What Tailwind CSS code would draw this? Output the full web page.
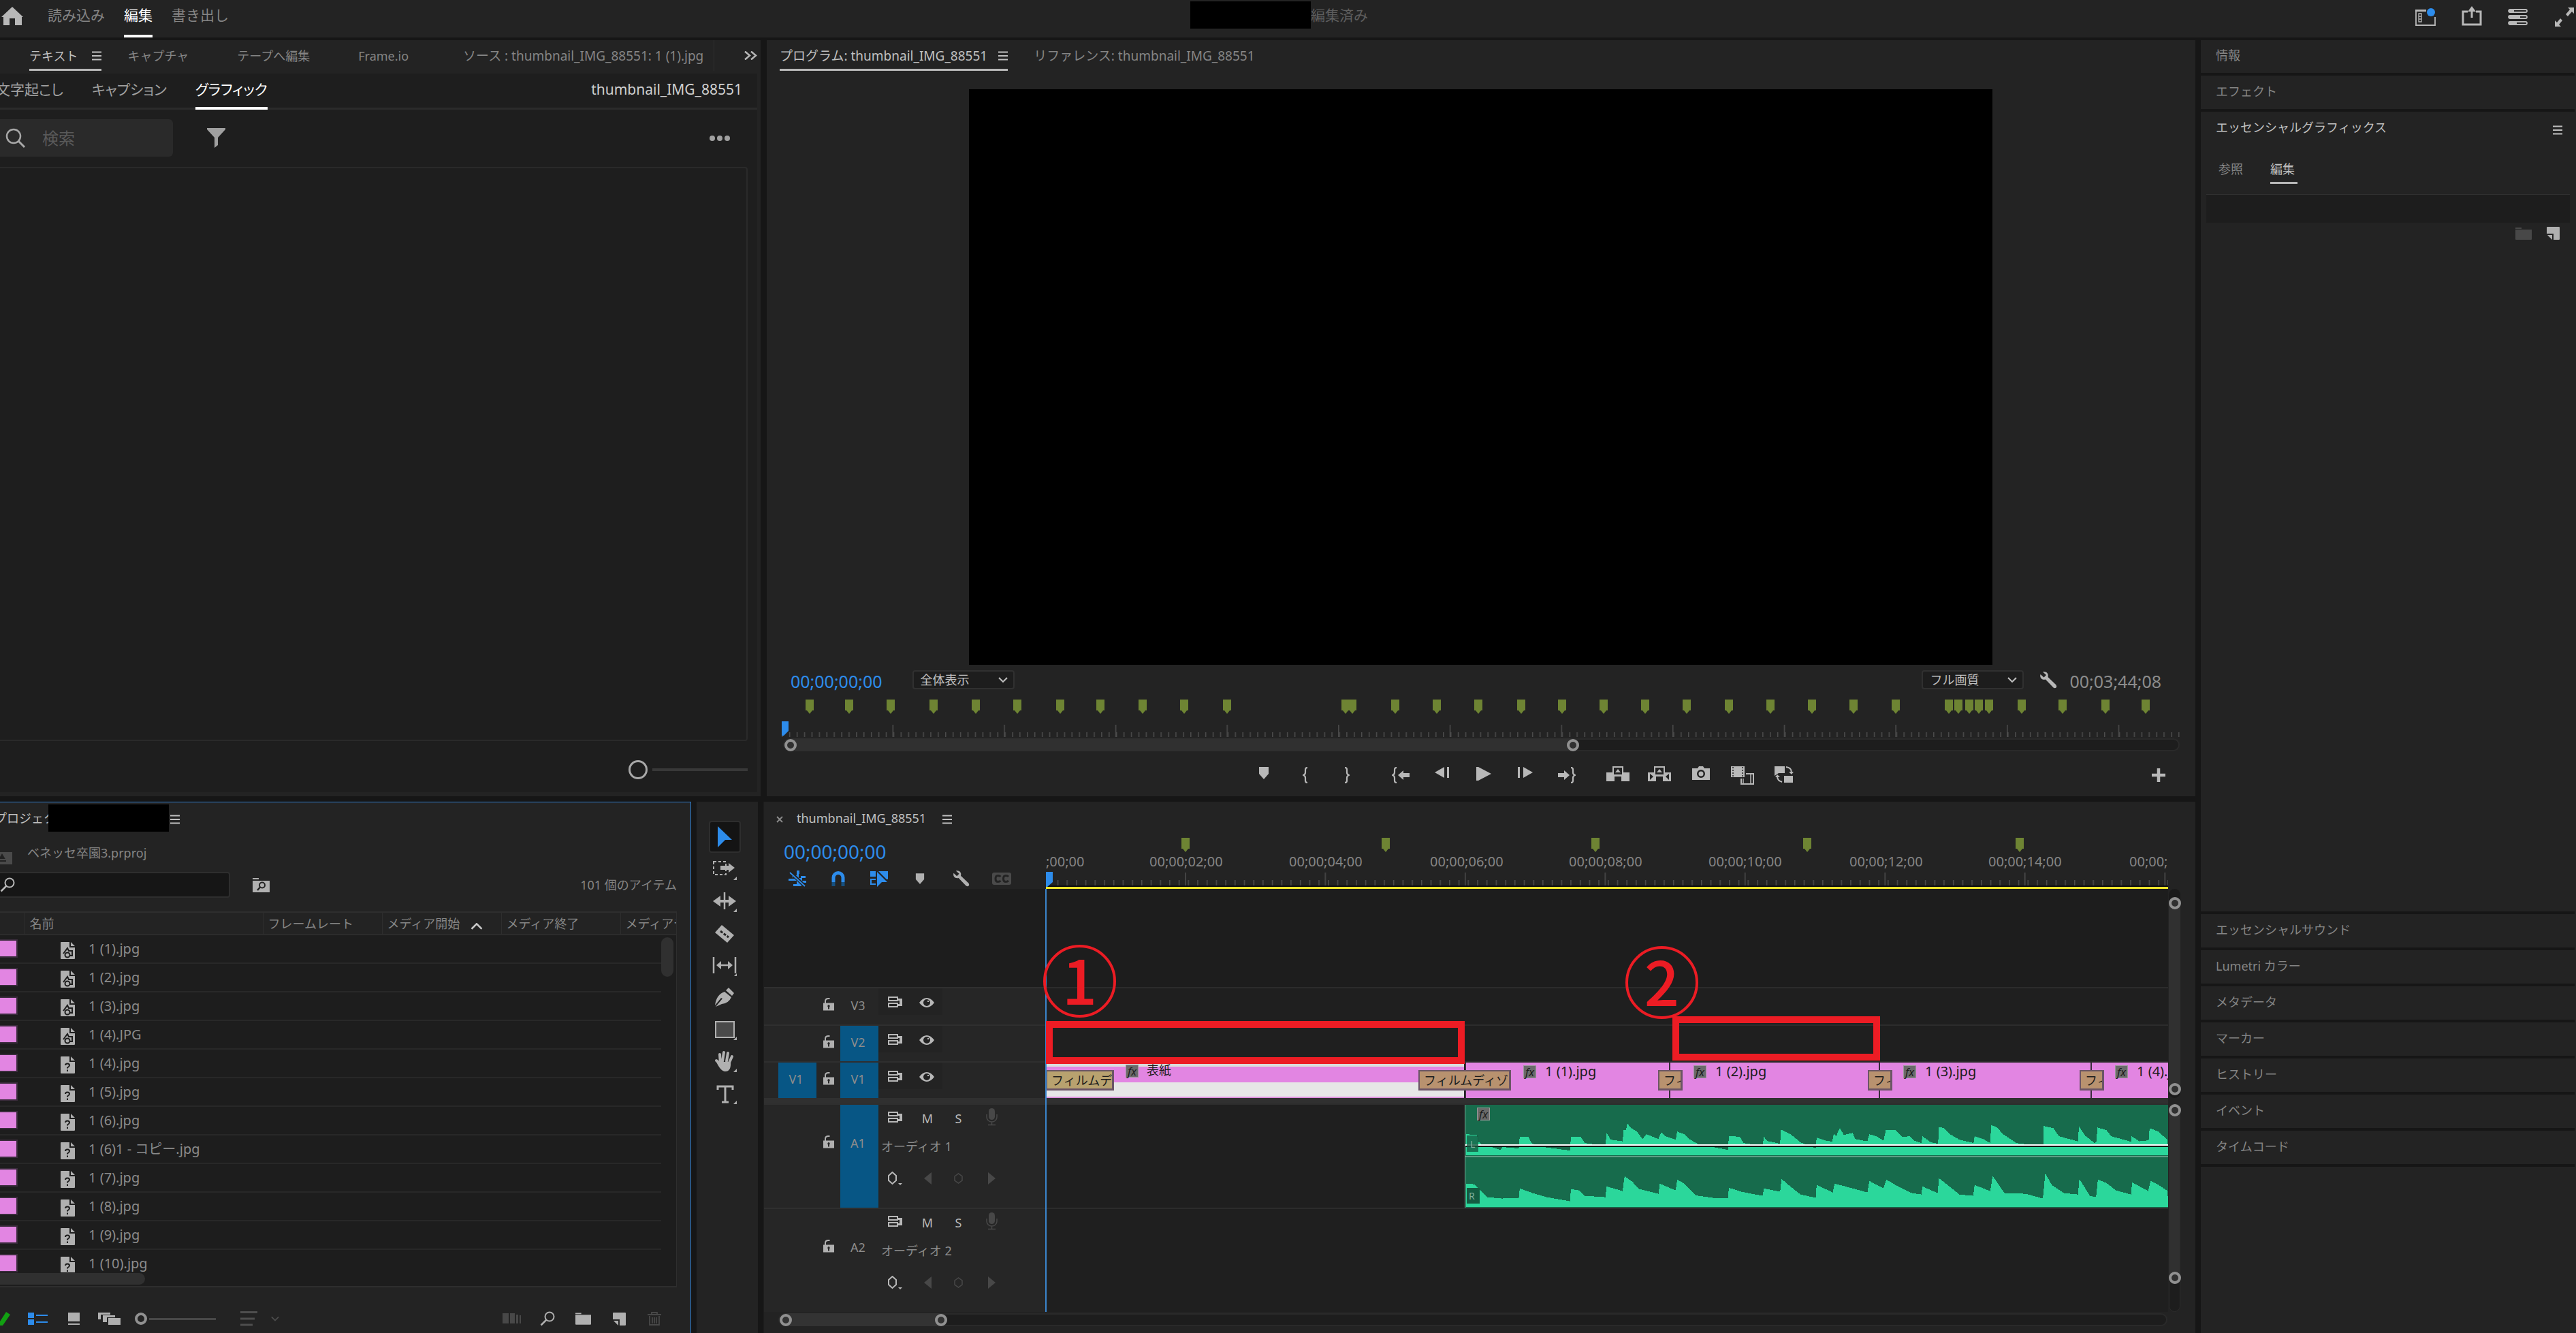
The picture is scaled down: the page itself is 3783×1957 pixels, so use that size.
<!DOCTYPE html>
<html lang="ja">
<head>
<meta charset="utf-8">
<meta name="viewport" content="width=device-width, initial-scale=1">
<title>thumbnail_IMG_88551</title>
<script src="https://cdn.jsdelivr.net/npm/@tailwindcss/browser@4"></script>
</head>
<body class="flex h-screen flex-col overflow-hidden bg-[#161616] font-['Noto_Sans','Noto_Sans_CJK_JP',sans-serif] text-[18px] leading-6 text-[#858585]">

<!-- Icon sheet -->
<svg class="hidden" aria-hidden="true">
  <symbol id="menu" viewBox="0 0 14 14"><path d="M0 1.5H14M0 7H14M0 12.5H14" stroke="currentColor" stroke-width="2"/></symbol>
  <symbol id="chev" viewBox="0 0 14 8"><path d="M1 1L7 7L13 1" fill="none" stroke="currentColor" stroke-width="2"/></symbol>
  <symbol id="mag" viewBox="0 0 22 22"><circle cx="14" cy="8" r="6.5" fill="none" stroke="currentColor" stroke-width="2"/><path d="M9.5 12.5L1.500 20.500" stroke="currentColor" stroke-width="2.500"/></symbol>
  <symbol id="folder" viewBox="0 0 24 18"><path d="M0 0H9V2H0ZM0 3H24V17Q24 18 23 18H1Q0 18 0 17Z" fill="currentColor"/></symbol>
  <symbol id="newitem" viewBox="0 0 19 19"><path d="M1 0H18Q19 0 19 1V18Q19 19 18 19H10V10H0V1Q0 0 1 0ZM1 12H8V19Z" fill="currentColor"/></symbol>
  <symbol id="wrench" viewBox="0 0 26 26"><path d="M5 1.500L10 6L6.500 9.500L1.500 5C0 10 4 14 9 12.500L20.500 24.500Q23 26 24.500 24.500Q26 23 24.500 20.500L12.500 9C14 4 10 0 5 1.500Z" fill="currentColor"/></symbol>
  <symbol id="pin" viewBox="0 0 16 18"><path d="M1 0H15V10L8 18L1 10Z" fill="currentColor"/></symbol>
  <symbol id="mk" viewBox="0 0 12 21" overflow="visible"><path d="M0 0H12V16H10L6 21L2 16H0Z" fill="#6e8433"/></symbol>
  <symbol id="brace" viewBox="0 0 8 24"><path d="M7 1Q4 1 4 4V8Q4 11 1 12Q4 13 4 16V20Q4 23 7 23" fill="none" stroke="currentColor" stroke-width="2.200"/></symbol>
  <symbol id="lock" viewBox="0 0 16 19"><path d="M3 8V5C3 2 5 1 7.500 1H9.500" fill="none" stroke="currentColor" stroke-width="2"/><path fill-rule="evenodd" d="M0 7.500H16V18.500H0ZM8 10A2 2 0 0 0 7 13.500V16.500H9V13.500A2 2 0 0 0 8 10Z" fill="currentColor"/></symbol>
  <symbol id="sync" viewBox="0 0 22 16"><path d="M1 1H14V6H1ZM1 10H14V15H1Z" fill="none" stroke="currentColor" stroke-width="2"/><path d="M14 3H21V14H14V11H17V6H14Z" fill="currentColor"/></symbol>
  <symbol id="eye" viewBox="0 0 22 14"><path fill-rule="evenodd" d="M0 7Q5 0 11 0Q17 0 22 7Q17 14 11 14Q5 14 0 7ZM11 2A5 5 0 1 0 11 12A5 5 0 1 0 11 2Z" fill="currentColor"/><circle cx="11" cy="7" r="3" fill="#232323"/><rect x="12" y="4" width="2" height="2" fill="currentColor"/></symbol>
  <symbol id="mic" viewBox="0 0 17 26"><rect x="4" y="0" width="9" height="17" rx="4.500" fill="currentColor"/><path d="M1 9V13A7.500 7 0 0 0 16 13V9M8.500 20V24M3 24.500H14" fill="none" stroke="currentColor" stroke-width="1.500"/></symbol>
  <symbol id="hex" viewBox="0 0 22 20"><path d="M1 6L6.500 1L12 6V13L6.500 18L1 13Z" fill="none" stroke="currentColor" stroke-width="2"/><path d="M15 17H21L18 20Z" fill="currentColor"/></symbol>
  <symbol id="doc-photo" viewBox="0 0 22 25"><path d="M1 0H13V8H21V24Q21 25 20 25H1Q0 25 0 24V1Q0 0 1 0ZM15 0L21 6H15Z" fill="currentColor"/><path d="M4 17L10 9L12 13H17V20H13" fill="none" stroke="#1d1d1d" stroke-width="2"/><circle cx="10" cy="19" r="3.500" fill="currentColor" stroke="#1d1d1d" stroke-width="2"/></symbol>
  <symbol id="doc-q" viewBox="0 0 22 25"><path d="M1 0H13V8H21V24Q21 25 20 25H1Q0 25 0 24V1Q0 0 1 0ZM15 0L21 6H15Z" fill="currentColor"/><path d="M7 13Q7 10.500 10 10.500Q13 10.500 13 13Q13 14.500 10 16.500V17.500M10 19.500V22" fill="none" stroke="#1d1d1d" stroke-width="2"/></symbol>
</svg>

<!-- Application bar -->
<header class="mb-1 flex h-[55px] shrink-0 bg-[#232323] text-[21px]">
  <div class="flex flex-1">
    <button class="mt-2.5 ml-0.5 h-7 w-8" aria-label="ホーム"><svg viewBox="0 0 32 28" class="h-7 w-8 text-[#b8b8b8]"><path d="M16 0L32 15H30V27H20V17H12V27H3V15H0Z" fill="currentColor"/></svg></button>
    <nav class="ml-9 flex gap-7">
      <a href="#" class="pt-2.5">読み込み</a>
      <a href="#" class="border-b-4 border-white pt-2.5 text-white">編集</a>
      <a href="#" class="pt-2.5">書き出し</a>
    </nav>
  </div>
  <div class="flex pt-0.5 pr-6 text-[#5e5e5e]"><span class="h-10 w-[177px] bg-black"></span><span class="pt-2">編集済み</span></div>
  <div class="flex flex-1 justify-end gap-[38px] pt-2 pr-0.5 text-[#b8b8b8]">
    <button aria-label="ワークスペース" class="h-8"><svg viewBox="0 0 30 30" class="h-[30px] w-[30px]"><path d="M1 5V28H29V16" fill="none" stroke="currentColor" stroke-width="1.800"/><path d="M0 5H16V8H0Z" fill="currentColor"/><path d="M5 11H9V23H5ZM5 15H9M5 19H9" fill="none" stroke="currentColor" stroke-width="1.300"/><circle cx="23" cy="9" r="6" fill="#2d8ceb"/></svg></button>
    <button aria-label="クイック書き出し" class="h-8"><svg viewBox="0 0 30 30" class="h-[30px] w-[30px]"><path d="M9 8H2V27H28V8H21" fill="none" stroke="currentColor" stroke-width="3"/><path d="M13.500 17V8H9L15 0L21 8H16.500V17Z" fill="currentColor"/></svg></button>
    <button aria-label="進行状況" class="h-8"><svg viewBox="0 0 30 30" class="h-[30px] w-[30px]" fill="none" stroke="currentColor" stroke-width="1.800"><rect x="1" y="5" width="27" height="4" rx="2"/><rect x="1" y="14" width="27" height="4" rx="2"/><rect x="1" y="23" width="27" height="4" rx="2"/><path d="M2 7H9M2 16H18M2 25H13" stroke-width="4"/></svg></button>
    <button aria-label="全画面" class="h-8"><svg viewBox="0 0 30 30" class="h-[30px] w-[30px]"><path d="M20 2H29V11L26 8L20 15L17 12L23 5ZM1 30V21L4 24L9 18L12 21L7 27L10 30Z" fill="currentColor"/></svg></button>
  </div>
</header>

<main class="flex min-h-0 flex-1 gap-2">
 <div class="flex min-w-0 flex-1 flex-col gap-2">

  <div class="grid min-h-0 flex-[37] grid-cols-[1117fr_2098fr] gap-[9px]">
   <!-- Text panel -->
   <section class="flex min-w-0 flex-col bg-[#232323]">
    <div class="flex h-[49px]">
      <nav class="ml-[43px] flex h-[45px] w-[1006px] gap-[38px] overflow-hidden border-r border-[#303030] pt-1 leading-[38px] whitespace-nowrap">
        <a href="#" class="flex items-center gap-[21px] border-b-[3px] border-[#b8b8b8] text-[#c0c0c0]">テキスト<svg class="h-3.5 w-3.5"><use href="#menu"/></svg></a>
        <a href="#" class="pr-[33px]">キャプチャ</a>
        <a href="#" class="pr-[33px]">テープへ編集</a>
        <a href="#" class="pr-[42px]">Frame.io</a>
        <a href="#" class="text-[19px]">ソース : thumbnail_IMG_88551: 1 (1).jpg</a>
      </nav>
      <button class="ml-11 h-[45px] text-[#b8b8b8]" aria-label="その他のパネル"><svg viewBox="0 0 19 13" class="h-[13px] w-[19px]"><path d="M1 0.500L8 6.500L1 12.500M10 0.500L17 6.500L10 12.500" fill="none" stroke="currentColor" stroke-width="2.500"/></svg></button>
    </div>
    <div class="mr-[5px] mb-1.5 flex min-h-0 flex-1 flex-col bg-[#1e1e1e]">
      <div class="flex h-[53px] justify-between border-b-[3px] border-[#2b2b2b] pr-[22px] text-[21px] leading-[46px] whitespace-nowrap text-[#a0a0a0]">
        <nav class="-ml-1.5 flex h-[53px] gap-[42px] [font-feature-settings:'palt']">
          <a href="#">文字起こし</a>
          <a href="#">キャプション</a>
          <a href="#" class="border-b-4 border-white text-white">グラフィック</a>
        </nav>
        <span class="text-[#cfcfcf]">thumbnail_IMG_88551</span>
      </div>
      <div class="mt-3.5 flex h-[55px] items-center">
        <label class="flex h-full w-[254px] items-center rounded-r-md bg-[#2a2a2a] pl-2 text-[#a8a8a8]">
          <svg viewBox="0 0 30 30" class="h-[30px] w-[30px]"><circle cx="12" cy="12" r="10" fill="none" stroke="currentColor" stroke-width="2.500"/><path d="M19 19L28 28" stroke="currentColor" stroke-width="3"/></svg>
          <input type="text" aria-label="検索" placeholder="検索" class="ml-6 w-40 bg-transparent text-[24px] outline-none placeholder:text-[#5a5a5a]">
        </label>
        <button class="ml-[50px]" aria-label="フィルター"><svg viewBox="0 0 27 29" class="h-[29px] w-[27px] text-[#a0a0a0]"><path d="M0 0H27V2L16 14V25L11 29V14L0 2Z" fill="currentColor"/></svg></button>
        <button class="mr-10 ml-auto" aria-label="その他"><svg viewBox="0 0 30 8" class="h-2 w-[30px] text-[#a0a0a0]" fill="currentColor"><circle cx="4" cy="4" r="4"/><circle cx="15" cy="4" r="4"/><circle cx="26" cy="4" r="4"/></svg></button>
      </div>
      <div class="mt-[15px] mr-3.5 flex-1 rounded-r border-2 border-l-0 border-[#2a2a2a]"></div>
      <div class="flex h-[75px] items-center justify-end pt-2 pr-3.5">
        <input type="range" value="0" aria-label="ズーム" class="h-7 w-[175px] appearance-none bg-transparent bg-[linear-gradient(#383838,#383838)] bg-[length:140px_4px] bg-[position:right_center] bg-no-repeat [&::-webkit-slider-thumb]:h-7 [&::-webkit-slider-thumb]:w-7 [&::-webkit-slider-thumb]:appearance-none [&::-webkit-slider-thumb]:rounded-full [&::-webkit-slider-thumb]:border-3 [&::-webkit-slider-thumb]:border-[#a8a8a8]">
      </div>
    </div>
   </section>

   <!-- Program monitor -->
   <section class="flex min-w-0 flex-col bg-[#232323]">
    <nav class="ml-[19px] flex h-[45px] gap-[38px] pt-1 text-[19px] leading-[38px]">
      <a href="#" class="flex items-center gap-4 border-b-[3px] border-[#b8b8b8] text-[#c0c0c0]">プログラム: thumbnail_IMG_88551<svg class="h-3.5 w-3.5"><use href="#menu"/></svg></a>
      <a href="#">リファレンス: thumbnail_IMG_88551</a>
    </nav>
    <div class="mt-[27px] mr-[298px] ml-[297px] flex-1 bg-black"></div>
    <div class="mt-2 flex h-7 items-center pr-[50px] pl-[35px] text-[#c0c0c0]">
      <span class="pt-1 text-[25px] text-[#2d8ceb]">00;00;00;00</span>
      <span class="relative ml-11 flex items-center"><select aria-label="ズームレベル" class="h-7 w-[150px] appearance-none rounded-sm border-2 border-[#303030] bg-[#1d1d1d] pl-2.5 text-[18px] leading-6"><option>全体表示</option></select><svg class="pointer-events-none absolute right-2.5 h-2 w-3.5"><use href="#chev"/></svg></span>
      <span class="relative mr-[23px] ml-auto flex items-center"><select aria-label="再生時の解像度" class="h-7 w-[150px] appearance-none rounded-sm border-2 border-[#303030] bg-[#1d1d1d] pl-2.5 text-[18px] leading-6"><option>フル画質</option></select><svg class="pointer-events-none absolute right-2.5 h-2 w-3.5"><use href="#chev"/></svg></span>
      <button aria-label="設定"><svg class="h-[26px] w-[26px] text-[#b8b8b8]"><use href="#wrench"/></svg></button>
      <span class="ml-[18px] pt-1 text-[25px] text-[#8c8c8c]">00;03;44;08</span>
    </div>
    <svg class="mt-[15px] mr-[23px] ml-[22px] block h-[55px]" viewBox="0 0 2053 55" preserveAspectRatio="none">
      <defs>
        <pattern id="t1" x="0" y="0" width="10.910" height="55" patternUnits="userSpaceOnUse"><rect x="0" y="48" width="1.500" height="7" fill="#4c4c4c"/></pattern>
        <pattern id="t2" x="162.500" y="0" width="163.650" height="55" patternUnits="userSpaceOnUse"><rect x="0" y="37" width="1.500" height="18" fill="#4c4c4c"/></pattern>
      </defs>
      <rect width="2053" height="55" fill="url(#t1)"/><rect width="2053" height="55" fill="url(#t2)"/>
      <g id="program-markers"></g>
      <path d="M0 32H10V46L3 53H0Z" fill="#2d8ceb"/>
    </svg>
    <div class="mt-0.5 mr-[23px] ml-6 flex h-[19px] rounded-full border-2 border-[#2a2a2a] bg-[#1d1d1d]">
      <div class="-my-0.5 flex w-[57%] items-center justify-between rounded-full bg-[#303030]"><span class="h-[18px] w-[18px] rounded-full border-4 border-[#919191]"></span><span class="h-[18px] w-[18px] rounded-full border-4 border-[#919191]"></span></div>
    </div>
    <div class="flex h-[66px] items-center pt-1 text-[#b8b8b8]">
      <span class="flex-[11]"></span>
      <div class="mr-[18px] flex">
        <button class="flex w-[61px] justify-center" aria-label="マーカーを追加"><svg class="h-[18px] w-4"><use href="#pin"/></svg></button>
        <button class="flex w-[61px] justify-center" aria-label="インをマーク"><svg class="h-6 w-2"><use href="#brace"/></svg></button>
        <button class="flex w-[61px] justify-center" aria-label="アウトをマーク"><svg class="h-6 w-2 -scale-x-100"><use href="#brace"/></svg></button>
      </div>
      <div class="mr-3.5 flex">
        <button class="flex w-[61px] justify-center" aria-label="インへ移動"><svg class="h-6 w-[26px]" viewBox="0 0 26 24"><use href="#brace" width="8" height="24"/><path d="M9 12L17 5V9H26V15H17V19Z" fill="currentColor"/></svg></button>
        <button class="flex w-[61px] justify-center" aria-label="1フレーム戻る"><svg class="h-4 w-[22px]" viewBox="0 0 22 16"><path d="M0 8L14 0V16ZM18 0H21V16H18Z" fill="currentColor"/></svg></button>
        <button class="flex w-[61px] justify-center" aria-label="再生"><svg class="h-5 w-[22px]" viewBox="0 0 22 20"><path d="M0 0H3L22 10L3 20H0Z" fill="currentColor"/></svg></button>
        <button class="flex w-[61px] justify-center" aria-label="1フレーム進む"><svg class="h-4 w-[22px]" viewBox="0 0 22 16"><path d="M22 8L8 0V16ZM0 0H3V16H0Z" fill="currentColor"/></svg></button>
        <button class="flex w-[61px] justify-center" aria-label="アウトへ移動"><svg class="h-6 w-[26px] -scale-x-100" viewBox="0 0 26 24"><use href="#brace" width="8" height="24"/><path d="M9 12L17 5V9H26V15H17V19Z" fill="currentColor"/></svg></button>
      </div>
      <div class="flex">
        <button class="flex w-[61px] justify-center" aria-label="リフト"><svg class="h-[22px] w-[34px]" viewBox="0 0 34 22"><path d="M0 9H9V0H25V9H34V22H22V15H12V22H0Z" fill="currentColor"/><path d="M11 2H23V12H11Z" fill="#232323"/><path d="M13 9L17 4L21 9Z" fill="currentColor"/></svg></button>
        <button class="flex w-[61px] justify-center" aria-label="抽出"><svg class="h-[22px] w-[34px]" viewBox="0 0 34 22"><path d="M0 9H9V0H25V9H34V22H22V15H12V22H0Z" fill="currentColor"/><path d="M11 2H23V12H11ZM3 11L8 15L3 20ZM31 11L26 15L31 20Z" fill="#232323"/><path d="M13 9L17 4L21 9Z" fill="currentColor"/></svg></button>
        <button class="flex w-[61px] justify-center" aria-label="フレームを書き出し"><svg class="h-5 w-[26px]" viewBox="0 0 26 20"><path fill-rule="evenodd" d="M0 3H8L10 0H16L18 3H26V20H0ZM13 5A6 6 0 1 0 13 17A6 6 0 1 0 13 5Z" fill="currentColor"/><circle cx="13" cy="11" r="3.500" fill="currentColor"/></svg></button>
        <button class="flex w-[61px] justify-center" aria-label="比較表示"><svg class="h-[27px] w-[34px]" viewBox="0 0 34 27"><path d="M0 0H20V16H0Z" fill="currentColor"/><path d="M3 1V16M17 1V16" stroke="#232323" stroke-width="1.500" stroke-dasharray="2 2"/><path d="M22 11H33V26H15V18" fill="none" stroke="currentColor" stroke-width="2"/><path d="M18 18V25M29 12V25" stroke="currentColor" stroke-width="1.500"/></svg></button>
        <button class="flex w-[61px] justify-center" aria-label="プロキシの切り替え"><svg class="h-6 w-[28px]" viewBox="0 0 28 24"><path d="M0 0H15V10H6L0 14ZM14 14H27V24H14Z" fill="currentColor"/><path d="M17 1Q25 2 25 9M11 23Q4 21 4 15" fill="none" stroke="currentColor" stroke-width="2"/><path d="M21 8H28L25 12ZM1 16H8L4 12Z" fill="currentColor"/></svg></button>
      </div>
      <span class="flex-[8]"></span>
      <button class="mr-11" aria-label="ボタンエディター"><svg class="h-5 w-5" viewBox="0 0 20 20"><path d="M10 0V20M0 10H20" stroke="currentColor" stroke-width="4.500"/></svg></button>
    </div>
   </section>
  </div>

  <div class="grid min-h-0 flex-[26] grid-cols-[1015fr_90px_2103fr] gap-2">
   <!-- Project panel -->
   <section class="flex min-w-0 flex-col border-t border-r border-[#2f7fd0] bg-[#232323]">
    <div class="flex h-[46px] items-center overflow-hidden text-[#c0c0c0]">
      <span class="-ml-2 w-[79px] overflow-hidden whitespace-nowrap">プロジェクト</span><span class="h-10 w-[177px] bg-black"></span><svg class="mt-1 ml-0.5 h-3.5 w-3.5"><use href="#menu"/></svg>
    </div>
    <div class="flex h-14 items-center">
      <svg viewBox="0 0 18 18" class="mt-4 h-[18px] w-[18px]"><path d="M0 0H18V18H0Z" fill="#4a4a4a"/><path d="M0 13H9M0 9L3 4L6 9Z" stroke="#222" stroke-width="2" fill="#222"/></svg>
      <span class="ml-[22px]">ベネッセ卒園3.prproj</span>
    </div>
    <div class="flex h-[38px] items-center">
      <label class="flex h-full w-[338px] items-center rounded-r border-2 border-l-0 border-[#2e2e2e] bg-[#161616] text-[#b8b8b8]"><svg class="h-[22px] w-[22px]"><use href="#mag"/></svg><input type="text" aria-label="プロジェクトを検索" class="ml-2 min-w-0 flex-1 bg-transparent outline-none"></label>
      <button class="ml-[33px]" aria-label="クエリから新規検索ビン"><svg viewBox="0 0 25 21" class="h-[21px] w-[25px] text-[#b0b0b0]"><path d="M0 0H9V2H0ZM0 4H25V21H0Z" fill="currentColor"/><circle cx="14" cy="10.500" r="4" fill="none" stroke="#232323" stroke-width="2"/><path d="M11 13.500L7 18" stroke="#232323" stroke-width="2.500"/></svg></button>
      <span class="mr-5 ml-auto">101 個のアイテム</span>
    </div>
    <div class="relative mt-5 mr-5 min-h-0 flex-1 overflow-hidden border-y-2 border-r border-[#2e2e2e] bg-[#1d1d1d]">
      <table class="w-full table-fixed border-collapse text-left">
        <colgroup><col class="w-9"><col class="w-[350px]"><col class="w-[175px]"><col class="w-[175px]"><col class="w-[175px]"><col></colgroup>
        <thead class="bg-[#232323]">
          <tr class="h-8 border-b-2 border-[#2c2c2c] whitespace-nowrap">
            <th class="p-0"><span class="sr-only">ラベル</span></th>
            <th class="border-l border-[#2e2e2e] py-0 pr-0 pl-[7px] font-normal">名前</th>
            <th class="border-l border-[#2e2e2e] py-0 pr-0 pl-[7px] font-normal">フレームレート</th>
            <th class="border-l border-[#2e2e2e] py-0 pr-0 pl-[7px] font-normal"><span class="flex items-center gap-[15px]">メディア開始<svg class="mt-2 h-2.5 w-5 -scale-y-100 text-[#c8c8c8]"><use href="#chev"/></svg></span></th>
            <th class="border-l border-[#2e2e2e] py-0 pr-0 pl-[7px] font-normal">メディア終了</th>
            <th class="overflow-hidden border-l border-[#2e2e2e] py-0 pr-0 pl-[7px] font-normal">メディアデュレーション</th>
          </tr>
        </thead>
        <tbody id="bin" class="text-[20px] text-[#8c8c8c]"></tbody>
      </table>
      <div class="absolute top-9 right-0 bottom-0 w-[22px] bg-[#1d1d1d]"><div class="h-[58px] w-[18px] rounded-full bg-[#303030]"></div></div>
      <div class="absolute inset-x-0 bottom-0 h-5 bg-[#1d1d1d]"><div class="mt-px h-[17px] w-[213px] rounded-r-full bg-[#303030]"></div></div>
    </div>
    <div class="mb-[1px] flex h-[66px] items-center pt-[26px] text-[#b0b0b0]">
      <button aria-label="書き込み可能"><svg class="h-5 w-[15px]" viewBox="0 0 15 20"><path d="M0 14L9 0L15 4L4 20H0Z" fill="#12a012"/></svg></button>
      <button aria-label="リスト表示" class="ml-[26px]"><svg class="h-[18px] w-[29px]" viewBox="0 0 29 18"><path d="M0 0H9V8H0ZM0 10H9V18H0ZM12 3H29V5H12ZM12 13H29V15H12Z" fill="#2d8ceb"/></svg></button>
      <button aria-label="アイコン表示" class="ml-[29px]"><svg class="h-[18px] w-[19px]" viewBox="0 0 19 18"><path d="M1 0H18V13H1ZM1 16H18V18H1Z" fill="currentColor"/></svg></button>
      <button aria-label="フリーフォーム表示" class="ml-[26px]"><svg class="h-[18px] w-[33px]" viewBox="0 0 33 18"><path d="M15 8H33V18H15ZM0 0H18V3H4V10H0ZM7 4H25V7H13V14H7Z" fill="currentColor"/></svg></button>
      <input type="range" value="0" aria-label="アイコンサイズ" class="ml-[21px] h-[18px] w-[119px] appearance-none bg-transparent bg-[linear-gradient(#484848,#484848)] bg-[length:98px_3px] bg-[position:right_center] bg-no-repeat [&::-webkit-slider-thumb]:h-[18px] [&::-webkit-slider-thumb]:w-[18px] [&::-webkit-slider-thumb]:appearance-none [&::-webkit-slider-thumb]:rounded-full [&::-webkit-slider-thumb]:border-4 [&::-webkit-slider-thumb]:border-[#919191]">
      <button aria-label="並べ替え" class="ml-9 flex items-center gap-5 text-[#4e4e4e]"><svg class="h-[22px] w-[25px]" viewBox="0 0 25 22"><path d="M0 1.500H25M0 11H21M0 20H18" stroke="currentColor" stroke-width="3"/></svg><svg class="h-2 w-3"><use href="#chev"/></svg></button>
      <button aria-label="シーケンスへオートメーション" class="ml-auto text-[#484848]"><svg class="h-4 w-7" viewBox="0 0 28 16"><path d="M0 0H9V15H0ZM11 0H18V15H11ZM20 2H23V15H20ZM25 3H27V15H25Z" fill="currentColor"/></svg></button>
      <button aria-label="検索" class="ml-[27px]"><svg class="h-[22px] w-[22px]"><use href="#mag"/></svg></button>
      <button aria-label="新規ビン" class="ml-[30px]"><svg class="h-[18px] w-[23px]"><use href="#folder"/></svg></button>
      <button aria-label="新規項目" class="ml-8"><svg class="h-[19px] w-[19px]"><use href="#newitem"/></svg></button>
      <button aria-label="消去" class="mr-[43px] ml-8 text-[#484848]"><svg class="h-5 w-5" viewBox="0 0 20 20"><path d="M0 4H20M6 4V1H14V4M3 6V19H17V6M7 8V17M10 8V17M13 8V17" fill="none" stroke="currentColor" stroke-width="1.800"/></svg></button>
    </div>
   </section>

   <!-- Tools -->
   <nav class="flex flex-col items-center bg-[#232323] pt-7 pr-2 text-[#b0b0b0]">
    <button class="flex h-[47px] w-[47px] items-center justify-center rounded border-2 border-[#2e2e2e] bg-[#141414]" aria-label="選択ツール"><svg class="h-[31px] w-[22px]" viewBox="0 0 22 31"><path d="M1 0L22 20H12L1 31Z" fill="#2d8ceb"/></svg></button>
    <button class="flex h-[47px] w-[47px] items-center justify-center" aria-label="トラックの前方選択ツール"><svg class="h-8 w-9" viewBox="0 0 36 32"><path d="M2 5H20V24H2Z" fill="none" stroke="currentColor" stroke-width="2" stroke-dasharray="4 3"/><path d="M12 11H24V7L33 14L24 21V17H12Z" fill="currentColor"/><path d="M36 27V32H31Z" fill="currentColor"/></svg></button>
    <button class="flex h-[47px] w-[47px] items-center justify-center" aria-label="リップルツール"><svg class="h-8 w-9" viewBox="0 0 36 32"><path d="M18 3V28" stroke="currentColor" stroke-width="2.500"/><path d="M1 16L12 8V14H24V8L35 16L24 24V18H12V24Z" fill="currentColor"/><path d="M36 27V32H31Z" fill="currentColor"/></svg></button>
    <button class="flex h-[47px] w-[47px] items-center justify-center" aria-label="レーザーツール"><svg class="h-8 w-9" viewBox="0 0 36 32"><path d="M14 4L32 19L22 30L4 15Z" fill="currentColor"/><path d="M12 13L24 22" stroke="#232323" stroke-width="3" stroke-dasharray="4 2"/></svg></button>
    <button class="flex h-[47px] w-[47px] items-center justify-center" aria-label="スリップツール"><svg class="h-8 w-9" viewBox="0 0 36 32"><path d="M2 4V28M34 4V28M10 16H26" stroke="currentColor" stroke-width="2.500"/><path d="M6 16L13 10V22ZM30 16L23 10V22Z" fill="currentColor"/><path d="M36 28V32H32Z" fill="currentColor"/></svg></button>
    <button class="flex h-[47px] w-[47px] items-center justify-center" aria-label="ペンツール"><svg class="h-8 w-9" viewBox="0 0 36 32"><path d="M24 2L32 10L29 14L20 6ZM18 8L28 16Q24 25 14 26L5 30L15 18L13 17L4 28Q6 12 18 8Z" fill="currentColor"/></svg></button>
    <button class="flex h-[47px] w-[47px] items-center justify-center" aria-label="長方形ツール"><svg class="h-8 w-9" viewBox="0 0 36 32"><path d="M5 5H32V28H5Z" fill="#4a4a4a" stroke="currentColor" stroke-width="2"/><path d="M36 27V32H31Z" fill="currentColor"/></svg></button>
    <button class="flex h-[47px] w-[47px] items-center justify-center" aria-label="手のひらツール"><svg class="h-8 w-9" viewBox="0 0 36 32"><path d="M6 15L12 20L11 6M15 16L17 3M21 16L23 4M25 18L29 9" fill="none" stroke="currentColor" stroke-width="4" stroke-linecap="round"/><path d="M5 15L10 17H27Q28 31 19 31Q12 31 5 15Z" fill="currentColor"/><path d="M36 27V32H31Z" fill="currentColor"/></svg></button>
    <button class="flex h-[47px] w-[47px] items-center justify-center" aria-label="文字ツール"><svg class="h-8 w-9" viewBox="0 0 36 32"><path d="M8 11V6H30V11M19 6V28M14 29H24" fill="none" stroke="currentColor" stroke-width="3"/><path d="M36 27V32H31Z" fill="currentColor"/></svg></button>
   </nav>

   <!-- Timeline -->
   <section class="flex min-w-0 flex-col border-l border-[#1d1d1d] bg-[#232323]">
    <div class="flex h-12 items-center pl-[18px] text-[#c0c0c0]">
      <button aria-label="閉じる" class="mt-1 text-[#8c8c8c]"><svg class="h-2.5 w-2.5" viewBox="0 0 10 10"><path d="M1 1L9 9M9 1L1 9" stroke="currentColor" stroke-width="1.800"/></svg></button>
      <span class="ml-5">thumbnail_IMG_88551</span>
      <svg class="mt-1 ml-6 h-3.5 w-3.5"><use href="#menu"/></svg>
    </div>
    <div class="flex h-20">
      <div class="w-[414px]">
        <div class="pl-[29px] text-[28px] leading-[50px] text-[#2d8ceb]">00;00;00;00</div>
        <div class="flex h-[29px] items-center pl-[19px] text-[#b0b0b0]">
          <button class="flex w-15 justify-center" aria-label="ネスト"><svg class="h-6 w-[26px]" viewBox="0 0 26 24"><path d="M12 0H16V5H15V11H18V8H25V11H20V15H26V18H19V23H7V20H12V15H0V12H12V10H5V7H12Z" fill="#2d8ceb"/><path d="M2 2L25 24" stroke="#232323" stroke-width="5"/><path d="M2 3L24 23" stroke="#2d8ceb" stroke-width="1.800"/></svg></button>
          <button class="flex w-15 justify-center" aria-label="スナップ"><svg class="h-[22px] w-5" viewBox="0 0 20 22"><path d="M3 16V9.500A7 7 0 0 1 17 9.500V16" fill="none" stroke="#2d8ceb" stroke-width="5"/><path d="M3 16V22M17 16V22" stroke="#17507f" stroke-width="5"/></svg></button>
          <button class="flex w-15 justify-center" aria-label="リンクされた選択"><svg class="h-6 w-[26px]" viewBox="0 0 26 24"><path d="M0 1H8V9H0ZM12 1H26V13L24 13Z" fill="#2d8ceb"/><path d="M8 13H1V20H8" fill="none" stroke="#2d8ceb" stroke-width="2"/><path d="M10 2L25 17L17 17L10 24Z" fill="#2d8ceb"/></svg></button>
          <button class="flex w-15 justify-center" aria-label="マーカーを追加"><svg class="h-4 w-3.5"><use href="#pin"/></svg></button>
          <button class="flex w-15 justify-center" aria-label="タイムライン表示設定"><svg class="h-[25px] w-[25px]"><use href="#wrench"/></svg></button>
          <button class="flex w-15 justify-center" aria-label="キャプション"><svg class="h-[18px] w-7" viewBox="0 0 28 18"><rect width="28" height="18" rx="3" fill="#4a4a4a"/><path d="M12.500 6Q11 4.500 8.500 4.500Q5 4.500 5 9Q5 13.500 8.500 13.500Q11 13.500 12.500 12M24 6Q22.500 4.500 20 4.500Q16.500 4.500 16.500 9Q16.500 13.500 20 13.500Q22.500 13.500 24 12" fill="none" stroke="#232323" stroke-width="3"/></svg></button>
        </div>
      </div>
      <div class="relative mr-10 flex-1 overflow-hidden border-b-3 border-[#efe52b] text-[20px] whitespace-nowrap text-[#858585]">
        <svg class="absolute inset-0 h-[77px] w-full">
          <defs>
            <pattern id="t3" x="3" y="0" width="13.700" height="77" patternUnits="userSpaceOnUse"><rect x="0" y="67" width="1.500" height="8" fill="#4c4c4c"/></pattern>
            <pattern id="t4" x="204" y="0" width="205.500" height="77" patternUnits="userSpaceOnUse"><rect x="0" y="56" width="1.500" height="19" fill="#4c4c4c"/></pattern>
          </defs>
          <rect width="100%" height="77" fill="url(#t3)"/><rect width="100%" height="77" fill="url(#t4)"/>
          <g id="timeline-markers"></g>
          <rect y="75" width="100%" height="2" fill="#0c0c0c"/>
          <path d="M0 55H10V70L2 77H0Z" fill="#2d8ceb"/>
        </svg>
        <span class="absolute top-7 left-0">;00;00</span>
        <span class="absolute top-7 left-[152px]">00;00;02;00</span>
        <span class="absolute top-7 left-[357px]">00;00;04;00</span>
        <span class="absolute top-7 left-[564px]">00;00;06;00</span>
        <span class="absolute top-7 left-[768px]">00;00;08;00</span>
        <span class="absolute top-7 left-[973px]">00;00;10;00</span>
        <span class="absolute top-7 left-[1180px]">00;00;12;00</span>
        <span class="absolute top-7 left-[1384px]">00;00;14;00</span>
        <span class="absolute top-7 left-[1591px] w-[57px] overflow-hidden">00;00;16;00</span>
      </div>
    </div>

    <div class="relative flex min-h-0 flex-1">
      <div class="flex min-w-0 flex-1 flex-col">
        <div class="flex-1 bg-[#1d1d1d]"></div>
        <div id="v3" class="flex h-[55px]"></div>
        <div id="v2" class="flex h-[54px]"></div>
        <div id="v1" class="flex h-[54px]"></div>
        <div class="h-2 bg-[#303030]"></div>
        <div id="a1" class="flex h-[153px]"></div>
        <div id="a2" class="flex h-[153px]"></div>
      </div>
      <div class="flex w-10 flex-col gap-2">
        <div class="mx-px flex w-[17px] flex-1 flex-col rounded-full bg-[#1a1a1a] pt-3 pb-1"><div class="flex flex-1 flex-col items-center justify-between rounded-full bg-[#303030]"><span class="h-[18px] w-[18px] rounded-full border-4 border-[#919191]"></span><span class="h-[18px] w-[18px] rounded-full border-4 border-[#919191]"></span></div></div>
        <div class="mx-px flex h-[306px] w-[17px] flex-col rounded-full border border-[#2c2c2c] bg-[#1d1d1d] pb-10"><div class="flex flex-1 flex-col items-center justify-between rounded-full bg-[#303030]"><span class="h-[18px] w-[18px] rounded-full border-4 border-[#919191]"></span><span class="h-[18px] w-[18px] rounded-full border-4 border-[#919191]"></span></div></div>
      </div>
      <!-- Playhead and callouts float over the tracks -->
      <div class="absolute inset-y-0 left-[413px] w-0.5 bg-[#3b85cc]"></div>
      <div class="absolute bottom-[364px] left-[414px] h-[63px] w-[615px] border-10 border-[#ec1c24]"></div>
      <div class="absolute bottom-[369px] left-[1334px] h-[65px] w-[305px] border-10 border-[#ec1c24]"></div>
      <div class="absolute bottom-[432px] left-[410px] flex h-[107px] w-[107px] items-center justify-center rounded-full border-4 border-[#ec1c24] pb-2.5 font-['Noto_Sans_CJK_JP',sans-serif] text-[90px] leading-none font-medium text-[#ec1c24]">1</div>
      <div class="absolute bottom-[430px] left-[1265px] flex h-[107px] w-[107px] items-center justify-center rounded-full border-4 border-[#ec1c24] pb-2.5 font-['Noto_Sans_CJK_JP',sans-serif] text-[90px] leading-none font-medium text-[#ec1c24]">2</div>
    </div>

    <div class="flex h-[31px] pt-0.5 pr-[41px] pl-[21px]">
      <div class="flex h-[19px] flex-1 rounded-full border-2 border-[#2a2a2a] bg-[#1d1d1d]"><div class="-my-0.5 flex w-[246px] items-center justify-between rounded-full bg-[#333]"><span class="h-[18px] w-[18px] rounded-full border-4 border-[#919191]"></span><span class="h-[18px] w-[18px] rounded-full border-4 border-[#919191]"></span></div></div>
    </div>
   </section>
  </div>
 </div>

 <!-- Side stack -->
 <aside class="flex w-[551px] shrink-0 flex-col bg-[#232323] pr-0.5">
  <button class="flex h-[52px] items-center border-b-4 border-[#161616] pb-1 pl-[22px]">情報</button>
  <button class="flex h-[53px] items-center border-b-4 border-[#161616] pb-1 pl-[22px]">エフェクト</button>
  <div class="flex flex-1 flex-col border-b-4 border-[#161616]">
    <div class="flex h-[49px] items-center justify-between pr-[18px] pb-1 pl-[22px] text-[#c0c0c0]">エッセンシャルグラフィックス<svg class="mt-2 h-3.5 w-3.5"><use href="#menu"/></svg></div>
    <nav class="flex h-[57px] items-end gap-10 pl-[26px]">
      <a href="#" class="h-[34px] w-9">参照</a>
      <a href="#" class="h-[34px] w-10 border-b-[3px] border-[#b8b8b8] text-[#c0c0c0]">編集</a>
    </nav>
    <div class="mt-[15px] mr-[7px] ml-2 h-[42px] border-t border-[#303030] bg-[#1d1d1d]"></div>
    <div class="flex justify-end gap-[22px] pt-1.5 pr-[22px] text-[#b0b0b0]">
      <button aria-label="グループを作成" class="text-[#484848]"><svg class="h-[18px] w-6"><use href="#folder"/></svg></button>
      <button aria-label="新規レイヤー"><svg class="h-[19px] w-[19px]"><use href="#newitem"/></svg></button>
    </div>
  </div>
  <button class="flex h-[53px] items-center border-b-4 border-[#161616] pb-1 pl-[22px]">エッセンシャルサウンド</button>
  <button class="flex h-[53px] items-center border-b-4 border-[#161616] pb-1 pl-[22px]">Lumetri カラー</button>
  <button class="flex h-[53px] items-center border-b-4 border-[#161616] pb-1 pl-[22px]">メタデータ</button>
  <button class="flex h-[53px] items-center border-b-4 border-[#161616] pb-1 pl-[22px]">マーカー</button>
  <button class="flex h-[53px] items-center border-b-4 border-[#161616] pb-1 pl-[22px]">ヒストリー</button>
  <button class="flex h-[53px] items-center border-b-4 border-[#161616] pb-1 pl-[22px]">イベント</button>
  <button class="flex h-[53px] items-center border-b-4 border-[#161616] pb-1 pl-[22px]">タイムコード</button>
  <div class="h-[244px]"></div>
 </aside>
</main>

<script>
const $ = id => document.getElementById(id);

// Project bin: name, and whether the media is online
const bin = [['1 (1).jpg',1],['1 (2).jpg',1],['1 (3).jpg',1],['1 (4).JPG',1],['1 (4).jpg',0],['1 (5).jpg',0],['1 (6).jpg',0],['1 (6)1 - コピー.jpg',0],['1 (7).jpg',0],['1 (8).jpg',0],['1 (9).jpg',0],['1 (10).jpg',0]];
$('bin').innerHTML = bin.map(([name, online]) => `
  <tr class="h-[42px] border-b-2 border-[#282828]">
    <td class="p-0 align-top"><div class="mt-1.5 h-[27px] w-[26px] border-2 border-l-0 border-[#3a2c3c] bg-[#e285e2]"></div></td>
    <td class="p-0" colspan="5"><span class="flex items-center gap-[19px] pl-[53px]"><svg class="mt-1 h-[25px] w-[22px] text-[#b0b0b0]"><use href="#${online ? 'doc-photo' : 'doc-q'}"/></svg>${name}</span></td>
  </tr>`).join('');

// Markers, by centre x
const marks = (xs, y) => xs.map(x => `<use href="#mk" x="${x - 6}" y="${y}" width="12" height="21"/>`).join('');
$('program-markers').innerHTML = marks([41,99,160,223,285,346,409,468,530,591,654,828,838,901,962,1023,1086,1146,1207,1268,1329,1391,1452,1513,1574,1636,1714,1728,1744,1758,1773,1821,1881,1944,2003], 0);
$('timeline-markers').innerHTML = marks([205,499,807,1118,1430], 5);

// Video tracks
const fx = '<span class="flex h-[19px] w-[19px] shrink-0 items-center justify-center border border-[#999] bg-[#6a6a6a] font-[\'Liberation_Serif\',serif] text-[16px] leading-none text-[#1c1c1c] italic">fx</span>';
const clip = (pos, name) => `<div class="absolute inset-y-0 flex items-start gap-[13px] overflow-hidden border-l-2 border-[#3a2c3c] bg-[#e285e2] pt-1 text-[20px] leading-[17px] whitespace-nowrap text-[#1c1c1c] ${pos}">${fx}${name}</div>`;
const fade = (pos, name) => `<div class="absolute top-[11px] h-[30px] overflow-hidden border-2 border-r-[3px] border-b-[3px] border-[#6b5566] pl-1.5 leading-[26px] whitespace-nowrap text-[#1c1c1c] ${pos}">${name}</div>`;
const on = 'bg-[#075685]', off = 'bg-transparent';
const videoHead = (n, source, target) => `
  <div class="flex w-[414px] border-t-2 border-[#2f2f2f] bg-[#262626] text-[#8c8c8c]">
    <button class="ml-[21px] w-14 pr-1 pb-1 ${source ? on : off}">${source}</button>
    <button class="flex w-[35px] justify-center pt-3.5" aria-label="${n} ロック"><svg class="h-[19px] w-4 text-[#b0b0b0]"><use href="#lock"/></svg></button>
    <button class="w-14 pr-1 pb-1 ${target ? on : off}">${n}</button>
    <div class="flex h-[39px] w-[94px] items-center gap-6 bg-[#232323] pl-3.5 text-[#b8b8b8]">
      <button aria-label="${n} 同期ロック"><svg class="h-4 w-[22px]"><use href="#sync"/></svg></button>
      <button aria-label="${n} 出力"><svg class="mt-0.5 h-3.5 w-[22px]"><use href="#eye"/></svg></button>
    </div>
  </div>`;
const lane = inner => `<div class="relative min-w-0 flex-1 overflow-hidden border-t-2 border-[#2c2c2c] bg-[#1f1f1f]">${inner}</div>`;
$('v3').innerHTML = videoHead('V3', '', false) + lane('');
$('v2').innerHTML = videoHead('V2', '', true) + lane('');
$('v1').innerHTML = videoHead('V1', 'V1', true) + lane(`
  <div class="absolute inset-y-0 left-0 flex w-[614px] items-start gap-3 border-b-2 border-[#dc90dc] bg-[linear-gradient(#dcdcdc_6px,#e285e2_6px,#e285e2_29px,#e6e6e6_29px)] pt-[3px] pl-[117px] leading-[17px] text-[#1c1c1c]">${fx}表紙</div>`
  + clip('left-[615px] w-[301px] pl-[84px]', '1 (1).jpg') + clip('left-[915px] w-[308px] pl-[34px]', '1 (2).jpg')
  + clip('left-[1223px] w-[312px] pl-[34px]', '1 (3).jpg') + clip('left-[1534px] w-[130px] pl-[34px]', '1 (4).jpg')
  + fade('left-0 w-[100px] bg-[#b8a26f]', 'フィルムデ') + fade('left-[547px] w-[136px] bg-[#b8926f]', 'フィルムディゾルブ')
  + fade('left-[899px] w-9 bg-[#b8926f]', 'フィ') + fade('left-[1207px] w-9 bg-[#b8926f]', 'フィ') + fade('left-[1518px] w-9 bg-[#b8926f]', 'フィ'));

// Audio tracks
const audioHead = (n, name, target) => `
  <div class="flex w-[414px] border-t-2 border-[#2f2f2f] bg-[#262626] text-[#8c8c8c]">
    <button class="ml-[77px] flex w-[35px] items-center justify-center" aria-label="${n} ロック"><svg class="mb-[43px] h-[19px] w-4 text-[#b0b0b0]"><use href="#lock"/></svg></button>
    <button class="w-14 pr-1 pb-10 ${target ? on : off}">${n}</button>
    <div class="flex-1 pt-1">
      <div class="flex h-7 items-center text-[#b8b8b8]">
        <button class="flex w-[50px] justify-center" aria-label="${n} 同期ロック"><svg class="h-4 w-[22px]"><use href="#sync"/></svg></button>
        <button class="w-11 pt-1" aria-label="${n} ミュート">M</button><button class="w-[47px] pt-1" aria-label="${n} ソロ">S</button>
        <button class="flex w-[50px] justify-center text-[#484848]" aria-label="${n} 録音"><svg class="h-[26px] w-[17px]"><use href="#mic"/></svg></button>
      </div>
      <div class="mt-[17px] pl-1">${name}</div>
      <div class="mt-[21px] flex h-7 items-center pl-3.5 text-[#484848]">
        <button class="text-[#b8b8b8]" aria-label="キーフレームを表示"><svg class="h-5 w-[22px]"><use href="#hex"/></svg></button>
        <button class="ml-[31px]" aria-label="前のキーフレーム"><svg class="h-[18px] w-[11px]" viewBox="0 0 11 18"><path d="M11 0V18L0 9Z" fill="currentColor"/></svg></button>
        <button class="ml-[33px]" aria-label="キーフレームを追加"><svg class="h-4 w-[13px]" viewBox="0 0 13 16"><path d="M1 5L6.500 1L12 5V11L6.500 15L1 11Z" fill="none" stroke="currentColor" stroke-width="1.500"/></svg></button>
        <button class="ml-[37px]" aria-label="次のキーフレーム"><svg class="h-[18px] w-[11px]" viewBox="0 0 11 18"><path d="M0 0V18L11 9Z" fill="currentColor"/></svg></button>
      </div>
    </div>
  </div>`;
// Peak envelope of each channel: x, y pairs
const L = [20,984,43,986,45,1005,52,1014,70,1020,92,1030,97,1022,131,1026,133,991,151,991,158,1010,172,1020,239,1032,241,992,262,992,270,1010,314,1018,316,980,325,1000,350,1005,352,972,357,972,360,952,368,966,380,976,392,998,400,984,425,998,432,978,440,990,462,1000,465,976,480,984,490,998,510,1014,540,1022,572,1030,574,990,597,991,605,1010,645,1018,648,992,655,1004,682,1012,684,970,705,985,725,1008,757,1026,759,994,778,1003,792,1006,795,982,800,990,808,965,816,986,835,980,840,998,866,1005,870,984,885,990,900,1003,905,972,925,972,940,992,955,990,965,1003,980,1010,982,990,1000,1008,1015,1012,1017,962,1028,966,1040,984,1060,1000,1090,1010,1092,990,1110,998,1125,1010,1127,957,1140,964,1150,982,1180,1010,1237,1020,1238,960,1258,966,1270,990,1310,1005,1312,960,1325,988,1345,1010,1349,1005,1351,964,1370,972,1380,990,1422,1006,1423,990,1440,1005,1459,1002,1461,966,1480,976,1499,1002];
const R = [20,1130,38,1132,50,1150,65,1170,95,1174,131,1172,133,1144,160,1158,190,1170,239,1182,241,1146,258,1150,270,1166,314,1170,316,1138,350,1152,354,1108,370,1124,385,1146,426,1160,428,1130,462,1150,465,1118,480,1130,505,1165,540,1172,572,1172,574,1142,600,1154,645,1166,648,1144,682,1154,685,1116,705,1140,725,1162,757,1172,759,1134,793,1156,797,1130,840,1146,866,1156,870,1122,900,1144,906,1118,930,1138,960,1158,980,1162,982,1138,1014,1158,1017,1114,1035,1134,1060,1162,1089,1166,1092,1134,1125,1152,1130,1107,1155,1158,1200,1160,1236,1174,1241,1100,1255,1134,1280,1158,1310,1162,1313,1116,1335,1166,1348,1170,1352,1118,1370,1128,1390,1150,1422,1162,1424,1126,1458,1152,1463,1122,1480,1134,1499,1152];
const wave = (p, base) => `<polygon points="${p.join(' ')} 1500,${base} 20,${base}" fill="#2bd79b"/>`;
$('a1').innerHTML = audioHead('A1', 'オーディオ 1', true) + lane(`
  <div class="absolute inset-y-0 left-[615px] w-[1033px]">
    <svg class="absolute inset-0 h-full w-full" viewBox="17 897 1483 304" preserveAspectRatio="none" shape-rendering="crispEdges">
      <rect x="17" y="897" width="1483" height="304" fill="#176b4c"/>
      ${wave(L, 1046)}${wave(R, 1199)}
      <rect x="17" y="1047" width="1483" height="5" fill="#5f9c84"/><rect x="17" y="1014" width="1483" height="4" fill="#fff"/><rect x="17" y="1018" width="1483" height="3" fill="#111"/>
      <rect x="22" y="988" width="24" height="48" fill="#145c42" opacity="0.8"/><rect x="22" y="1142" width="26" height="46" fill="#145c42"/><rect x="17" y="897" width="2" height="304" fill="#7fae9b"/>
    </svg>
    <span class="absolute top-1 left-[18px]">${fx}</span>
    <span class="absolute top-[50px] left-2 text-[14px] leading-4 text-[#7fae9b]">L</span>
    <span class="absolute top-[126px] left-1.5 text-[14px] leading-4 text-[#7fae9b]">R</span>
  </div>`);
$('a2').innerHTML = audioHead('A2', 'オーディオ 2', false) + lane('');
</script>
</body>
</html>
